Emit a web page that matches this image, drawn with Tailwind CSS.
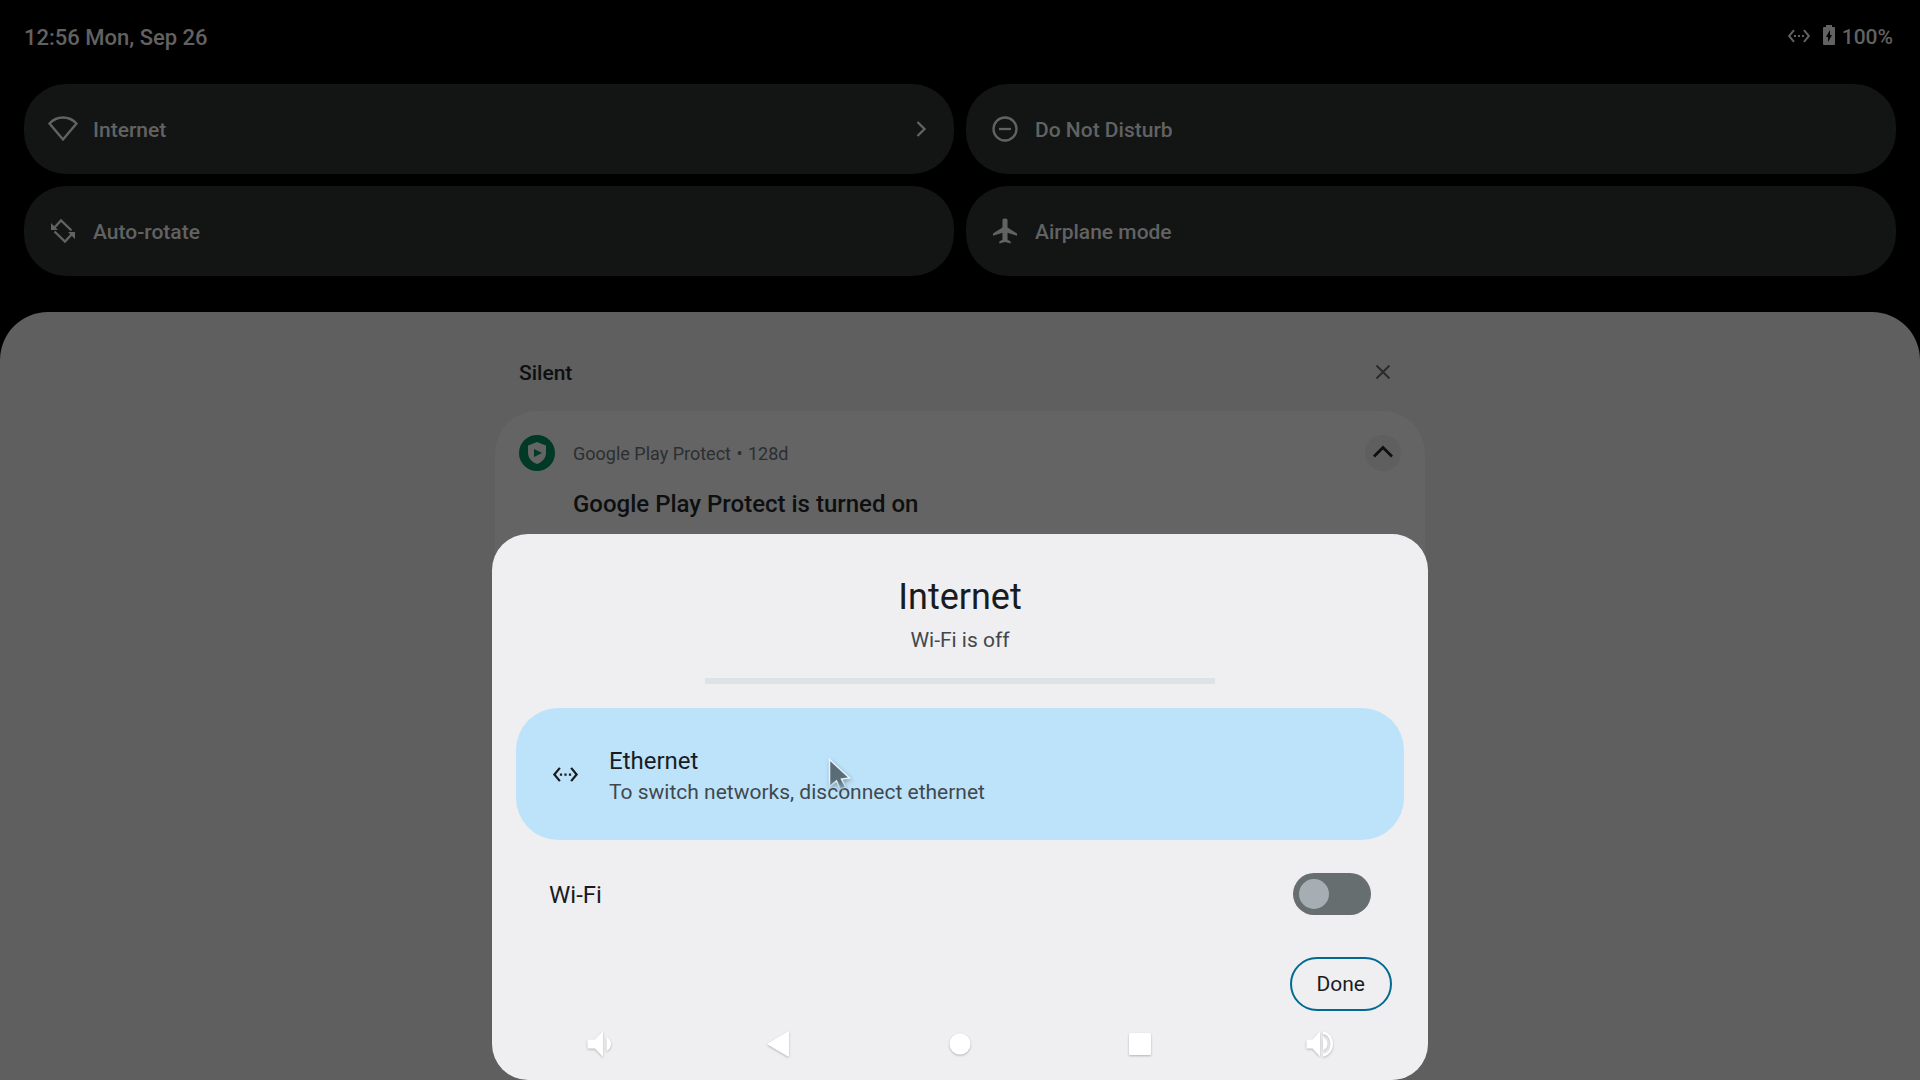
<!DOCTYPE html>
<html lang="en">
  <head>
    <meta charset="UTF-8" />
    <meta name="viewport" content="width=device-width, initial-scale=1.0" />
    <title>Internet</title>
    <script src="https://cdn.jsdelivr.net/npm/@tailwindcss/browser@4"></script>
  </head>

  <body
    class="h-screen overflow-hidden flex flex-col bg-black text-[#626262] font-['Roboto',sans-serif]"
  >
    <!-- Status bar -->
    <header
      class="h-[72px] shrink-0 px-6 flex items-center justify-between text-[21px] font-medium"
    >
      <span class="pt-[3px] text-[22px]">12:56 Mon, Sep 26</span>
      <div class="flex items-center pr-[3px]">
        <svg class="w-6 h-6 mr-3" viewBox="0 0 24 24" fill="currentColor">
          <path
            d="M7.770 6.760L6.230 5.480.820 12l5.410 6.520 1.540-1.280L3.420 12l4.350-5.240zM7 13h2v-2H7v2zm10-2h-2v2h2v-2zm-6 2h2v-2h-2v2zm6.770-7.520l-1.540 1.280L20.580 12l-4.350 5.240 1.540 1.280L23.180 12l-5.410-6.520z"
          />
        </svg>
        <svg class="w-3 h-5 mr-[7px] mb-[2px]" viewBox="0 0 12 20" fill="currentColor">
          <path
            fill-rule="evenodd"
            d="M3 0h6v2h2q1 0 1 1v16q0 1-1 1H1q-1 0-1-1V3q0-1 1-1h2zM7 5l-4 7h2v5l4-7H7z"
          />
        </svg>
        <span class="pt-[3px]">100%</span>
      </div>
    </header>

    <!-- Quick settings tiles -->
    <section
      class="shrink-0 mt-3 px-6 grid grid-cols-2 gap-3 text-[21px] font-medium"
    >
      <button
        class="h-[90px] pl-[21px] pr-6 rounded-[42px] bg-[#121514] flex items-center"
      >
        <svg class="w-9 h-9 mr-3" viewBox="0 0 36 36" fill="none" stroke="currentColor" stroke-width="2.400">
          <path d="M4.500 12.500C12 4.500 24 4.500 31.500 12.500L18 28.500z" />
        </svg>
        <span class="pt-[3px]">Internet</span>
        <svg class="w-[18px] h-[18px] ml-auto" viewBox="0 0 18 18" fill="none" stroke="currentColor" stroke-width="2.300">
          <path d="M5.500 2l7 7-7 7" />
        </svg>
      </button>
      <button
        class="h-[90px] pl-[21px] pr-6 rounded-[42px] bg-[#121514] flex items-center"
      >
        <svg class="w-9 h-9 mr-3" viewBox="0 0 36 36" fill="none" stroke="currentColor" stroke-width="2.300">
          <circle cx="18" cy="18" r="11.500" />
          <path d="M12 18h12" />
        </svg>
        <span class="pt-[3px]">Do Not Disturb</span>
      </button>
      <button
        class="h-[90px] pl-[21px] pr-6 rounded-[42px] bg-[#121514] flex items-center"
      >
        <svg class="w-9 h-9 mr-3" viewBox="0 0 36 36">
          <path
            d="M9.500 14.500L16 7.500l10.500 10M9.500 18.500l10.500 10 6.500-7"
            fill="none"
            stroke="currentColor"
            stroke-width="2.300"
          />
          <path d="M6 10v7h7zM30 26v-7h-7z" fill="currentColor" />
        </svg>
        <span class="pt-[3px]">Auto-rotate</span>
      </button>
      <button
        class="h-[90px] pl-[21px] pr-6 rounded-[42px] bg-[#121514] flex items-center"
      >
        <svg class="w-9 h-9 mr-3" viewBox="0 0 24 24" fill="currentColor">
          <path
            d="M20 15.200v-1.600l-6.300-4V4.800c0-.7-.6-1.200-1.200-1.200h-1c-.6 0-1.200.5-1.200 1.200v4.800L4 13.600v1.600l6.300-2v4.600L8.200 19v1.400l3.800-1 3.800 1V19l-2.100-1.200v-4.600z"
          />
        </svg>
        <span class="pt-[3px]">Airplane mode</span>
      </button>
    </section>

    <!-- Notification shade -->
    <main
      class="grow mt-9 pt-[30px] rounded-t-[48px] bg-[#5f5f5f] text-[#0d0f10]"
    >
      <div class="w-[930px] max-w-full mx-auto">
        <div class="h-[69px] pl-6 pr-[30px] pb-[9px] flex items-center justify-between">
          <h2 class="pt-[3px] text-[21px] font-medium">Silent</h2>
          <button aria-label="Clear silent notifications" class="text-[#292b2d]">
            <svg class="w-6 h-6" viewBox="0 0 24 24" fill="none" stroke="currentColor" stroke-width="2">
              <path d="M5.500 5.500l13 13M18.500 5.500l-13 13" />
            </svg>
          </button>
        </div>
        <article class="h-[300px] px-6 pt-6 rounded-t-[42px] bg-[#646464]">
          <div class="flex items-center text-lg text-[#2b2f31]">
            <svg class="w-9 h-9 mr-[18px]" viewBox="0 0 36 36">
              <circle cx="18" cy="18" r="18" fill="#003926" />
              <path
                d="M18 7l9 3.500V18c0 5-3.800 9-9 11-5.200-2-9-6-9-11v-7.500z"
                fill="#646464"
              />
              <path d="M15 14v8l8-4z" fill="#003926" />
            </svg>
            <p class="pt-[2px]">
              <span>Google Play Protect</span>
              <span class="mx-px">•</span>
              <span>128d</span>
            </p>
            <button
              aria-label="Collapse"
              class="ml-auto w-9 h-9 rounded-full bg-[#5f5f5f] text-[#0d0f10]"
            >
              <svg class="w-9 h-9" viewBox="0 0 36 36" fill="none" stroke="currentColor" stroke-width="2.800">
                <path d="M9 21.500l9-9 9 9" />
              </svg>
            </button>
          </div>
          <h3 class="mt-[17px] pl-[54px] text-2xl font-medium">
            Google Play Protect is turned on
          </h3>
        </article>
      </div>
    </main>

    <!-- Internet dialog -->
    <div class="fixed inset-x-0 bottom-0 flex justify-center">
      <div
        role="dialog"
        aria-labelledby="dialogTitle"
        class="w-[936px] max-w-full px-6 pt-[42px] pb-[69px] rounded-[36px] bg-[#efeff1] text-[#191c1e]"
      >
        <h1 id="dialogTitle" class="text-4xl leading-[42px] text-center">Internet</h1>
        <p class="mt-[9px] text-[21px] leading-[27px] text-center text-[#41484d]">
          Wi-Fi is off
        </p>
        <div class="w-[510px] h-[6px] mt-6 mx-auto bg-[#dce3e7]"></div>

        <button
          class="w-full h-[132px] mt-6 pl-9 rounded-[42px] bg-[#bde3fa] flex items-center text-left"
        >
          <svg class="w-[27px] h-[27px] mr-[30px]" viewBox="0 0 24 24" fill="currentColor">
            <path
              d="M7.770 6.760L6.230 5.480.820 12l5.410 6.520 1.540-1.280L3.420 12l4.350-5.240zM7 13h2v-2H7v2zm10-2h-2v2h2v-2zm-6 2h2v-2h-2v2zm6.770-7.520l-1.540 1.280L20.580 12l-4.350 5.240 1.540 1.280L23.180 12l-5.410-6.520z"
            />
          </svg>
          <span class="flex flex-col pt-1">
            <span class="text-2xl leading-8">Ethernet</span>
            <span class="text-[21px] leading-[30px] text-[#41484d]"
              >To switch networks, disconnect ethernet</span
            >
          </span>
        </button>

        <label
          class="h-[108px] pl-[33px] pr-[33px] flex items-center justify-between text-2xl"
        >
          <span class="pt-[2px]">Wi-Fi</span>
          <input
            type="checkbox"
            role="switch"
            class="appearance-none w-[78px] h-[42px] rounded-full bg-[#676e70] before:block before:w-[30px] before:h-[30px] before:m-[6px] before:rounded-full before:bg-[#a6aeb4] checked:before:ml-[42px]"
          />
        </label>

        <div class="mt-[9px] pr-3 flex justify-end">
          <button
            class="h-[54px] px-[25px] pt-[2px] rounded-full border-2 border-[#006a92] text-[21px]"
          >
            Done
          </button>
        </div>
      </div>
    </div>

    <!-- Navigation bar -->
    <nav
      class="fixed inset-x-0 bottom-0 h-[72px] flex items-center justify-center text-white"
    >
      <button aria-label="Volume down" class="w-[180px] flex justify-center">
        <svg class="w-9 h-9 drop-shadow-[0_1px_1px_rgb(0_0_0/0.25)]" viewBox="0 0 36 36" fill="currentColor">
          <path d="M5.500 13.500h7.500l8-8.500v26l-8-8.500H5.500zM24.500 11q4.500 2.500 4.500 7t-4.500 7z" />
        </svg>
      </button>
      <button aria-label="Back" class="w-[180px] flex justify-center">
        <svg class="w-9 h-9 drop-shadow-[0_1px_1px_rgb(0_0_0/0.25)]" viewBox="0 0 36 36" fill="currentColor">
          <path
            d="M6.500 18L26 6.500v23z"
            stroke="currentColor"
            stroke-width="2"
            stroke-linejoin="round"
          />
        </svg>
      </button>
      <button aria-label="Home" class="w-[180px] flex justify-center">
        <svg class="w-9 h-9 drop-shadow-[0_1px_1px_rgb(0_0_0/0.25)]" viewBox="0 0 36 36" fill="currentColor">
          <circle cx="18" cy="18" r="10.500" />
        </svg>
      </button>
      <button aria-label="Recent apps" class="w-[180px] flex justify-center">
        <svg class="w-9 h-9 drop-shadow-[0_1px_1px_rgb(0_0_0/0.25)]" viewBox="0 0 36 36" fill="currentColor">
          <rect x="7" y="7" width="22" height="22" rx="1.500" />
        </svg>
      </button>
      <button aria-label="Volume up" class="w-[180px] flex justify-center">
        <svg class="w-9 h-9 drop-shadow-[0_1px_1px_rgb(0_0_0/0.25)]" viewBox="0 0 36 36" fill="currentColor">
          <path d="M4.500 13.500h6l7.500-8v25l-7.500-8h-6zM21 11.500q4.500 2 4.500 6.500T21 24.500z" />
          <path
            d="M21 6.500C27 8 29.700 13 29.700 18S27 28 21 29.500"
            fill="none"
            stroke="currentColor"
            stroke-width="2.700"
          />
        </svg>
      </button>
    </nav>

    <!-- Mouse pointer -->
    <svg
      class="fixed left-[826px] top-[756px] w-[27px] h-[38px] pointer-events-none drop-shadow-[1px_2px_2px_rgb(0_0_0/0.3)]"
      viewBox="0 0 27 38"
    >
      <defs>
        <linearGradient id="pointerFade" x1="0" y1="0" x2="0" y2="1">
          <stop offset="0.7" stop-color="#596d79" />
          <stop offset="1" stop-color="#596d79" stop-opacity="0.2" />
        </linearGradient>
        <linearGradient id="outlineFade" x1="0" y1="0" x2="0" y2="1">
          <stop offset="0.7" stop-color="#e4f3fc" />
          <stop offset="1" stop-color="#e4f3fc" stop-opacity="0.3" />
        </linearGradient>
      </defs>
      <path
        d="M3.500 3.500v27l7-5.500 4 8.500 5-2.500-4-8 8-1z"
        fill="url(#pointerFade)"
        stroke="url(#outlineFade)"
        stroke-width="1.500"
      />
    </svg>
  </body>
</html>
